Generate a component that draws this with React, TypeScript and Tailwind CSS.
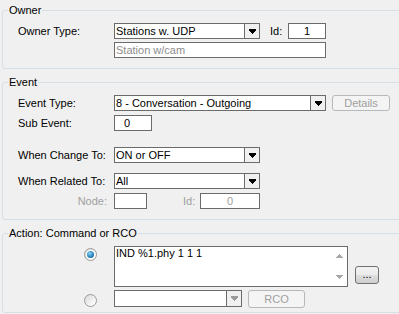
import React from "react";

const Arrow = ({ color = "#000" }: { color?: string }) => (
  <svg width="7" height="5" viewBox="0 0 7 5" shapeRendering="crispEdges">
    <polygon
      points="0,0 7,0 7,2 6,2 6,3 5,3 5,4 4,4 4,5 3,5 3,4 2,4 2,3 1,3 1,2 0,2"
      fill={color}
    />
  </svg>
);

const SmallArrow = ({ up }: { up?: boolean }) => (
  <svg width="7" height="4" viewBox="0 0 7 4" shapeRendering="crispEdges">
    {up ? (
      <polygon points="3,0 4,0 4,1 5,1 5,2 6,2 6,3 7,3 7,4 0,4 0,3 1,3 1,2 2,2 2,1 3,1" fill="#a7a7a7" />
    ) : (
      <polygon points="0,0 7,0 7,1 6,1 6,2 5,2 5,3 4,3 4,4 3,4 3,3 2,3 2,2 1,2 1,1 0,1" fill="#a7a7a7" />
    )}
  </svg>
);

function Combo({
  value,
  width,
  disabled,
  height = "h-[16px]",
}: {
  value: string;
  width: string;
  disabled?: boolean;
  height?: string;
}) {
  return (
    <div className={`${width} ${height} flex border border-[#6b6b6b] bg-white`}>
      <div className="flex-1 pl-[1px] flex items-center whitespace-nowrap overflow-hidden text-black">
        {value}
      </div>
      <div className="w-[15px] h-full border-l border-[#6b6b6b] bg-[#f0f0f0] flex items-center justify-center">
        <Arrow color={disabled ? "#9a9a9a" : "#000"} />
      </div>
    </div>
  );
}

function Input({
  value,
  width,
  className = "",
}: {
  value?: string;
  width: string;
  className?: string;
}) {
  return (
    <div
      className={`${width} h-[16px] border border-[#6b6b6b] bg-white flex items-center whitespace-nowrap ${className}`}
    >
      {value}
    </div>
  );
}

function Radio({ checked }: { checked?: boolean }) {
  return (
    <div className="w-[13px] h-[13px] rounded-full border border-[#9a9a9a] bg-[linear-gradient(135deg,#d8d8d8,#f7f7f7_70%,#ffffff)] flex items-center justify-center">
      {checked ? (
        <div className="w-[9px] h-[9px] rounded-full bg-white flex items-center justify-center">
          <div className="w-[7px] h-[7px] rounded-full bg-[radial-gradient(circle_at_40%_35%,#8fd3f5,#2a86c0_55%,#12496f)]" />
        </div>
      ) : null}
    </div>
  );
}

function Group({
  title,
  className = "",
  children,
}: {
  title: string;
  className?: string;
  children: React.ReactNode;
}) {
  return (
    <fieldset
      className={`ml-[2px] w-[404px] border border-[#d5dfe5] rounded-[3px] ${className}`}
    >
      <legend className="ml-[5px] px-[1px] leading-[13px] text-black">{title}</legend>
      {children}
    </fieldset>
  );
}

export default function App() {
  return (
    <div
      className="w-[399px] h-[314px] bg-[#f0f0f0] overflow-hidden text-[11px] leading-[13px] text-black pt-[4px]"
      style={{ fontFamily: '"Liberation Sans", Arial, sans-serif' }}
    >
      <Group title="Owner">
        <div className="flex flex-col gap-[3px] pl-[15px] pt-[6px] pb-[10px]">
          <div className="flex items-center h-[16px]">
            <div className="w-[96px]">Owner Type:</div>
            <Combo value="Stations w. UDP" width="w-[146px]" />
            <div className="ml-[10px] w-[18px]">Id:</div>
            <Input value="1" width="w-[38px]" className="justify-center" />
          </div>
          <div className="flex items-center h-[16px] pl-[96px]">
            <Input value="Station w/cam" width="w-[212px]" className="pl-[1px] text-[#8d8d8d]" />
          </div>
        </div>
      </Group>

      <Group title="Event" className="mt-[7px]">
        <div className="flex flex-col pl-[15px] pt-[6px] pb-[10px]">
          <div className="flex items-center h-[16px]">
            <div className="w-[96px]">Event Type:</div>
            <Combo value="8 - Conversation - Outgoing" width="w-[212px]" />
            <div className="ml-[6px] w-[58px] h-[16px] rounded-[3px] border border-[#b5b9bc] bg-[#f4f4f4] flex items-center justify-center text-[#a0a0a0]">
              Details
            </div>
          </div>
          <div className="flex items-center h-[16px] mt-[4px]">
            <div className="w-[96px]">Sub Event:</div>
            <Input value="0" width="w-[38px]" className="pl-[9px]" />
          </div>
          <div className="flex items-center h-[16px] mt-[16px]">
            <div className="w-[96px]">When Change To:</div>
            <Combo value="ON or OFF" width="w-[146px]" />
          </div>
          <div className="flex items-center h-[16px] mt-[10px]">
            <div className="w-[96px]">When Related To:</div>
            <Combo value="All" width="w-[146px]" />
          </div>
          <div className="flex items-center h-[16px] mt-[4px]">
            <div className="w-[96px] pr-[7px] text-right text-[#a0a0a0]">Node:</div>
            <Input width="w-[33px]" />
            <div className="ml-[36px] w-[17px] text-[#a0a0a0]">Id:</div>
            <Input value="0" width="w-[60px]" className="justify-center text-[#a0a0a0]" />
          </div>
        </div>
      </Group>

      <Group title="Action: Command or RCO" className="mt-[7px]">
        <div className="flex flex-col pl-[15px] pt-[6px] pb-[4px]">
          <div className="flex items-start">
            <div className="w-[96px] pl-[66px] pt-[2px]">
              <Radio checked />
            </div>
            <div className="w-[234px] h-[41px] border border-[#6b6b6b] bg-white flex">
              <div className="flex-1 pl-[1px] pt-[0px] whitespace-nowrap">IND %1.phy 1 1 1</div>
              <div className="w-[16px] h-full flex flex-col items-center justify-between pt-[7px] pb-[7px]">
                <SmallArrow up />
                <SmallArrow />
              </div>
            </div>
            <div className="ml-[7px] mt-[20px] w-[24px] h-[18px] rounded-[3px] border border-[#707070] bg-[linear-gradient(#f2f2f2,#ebebeb_50%,#dddddd_51%,#cfcfcf)] flex items-center justify-center leading-[10px] pb-[2px]">
              ...
            </div>
          </div>
          <div className="flex items-start h-[18px] mt-[3px]">
            <div className="w-[96px] pl-[66px] pt-[4px]">
              <Radio />
            </div>
            <Combo value="" width="w-[128px]" height="h-[17px]" disabled />
            <div className="ml-[6px] w-[57px] h-[18px] rounded-[3px] border border-[#b5b9bc] bg-[#f4f4f4] flex items-center justify-center text-[#a0a0a0]">
              RCO
            </div>
          </div>
        </div>
      </Group>
    </div>
  );
}
